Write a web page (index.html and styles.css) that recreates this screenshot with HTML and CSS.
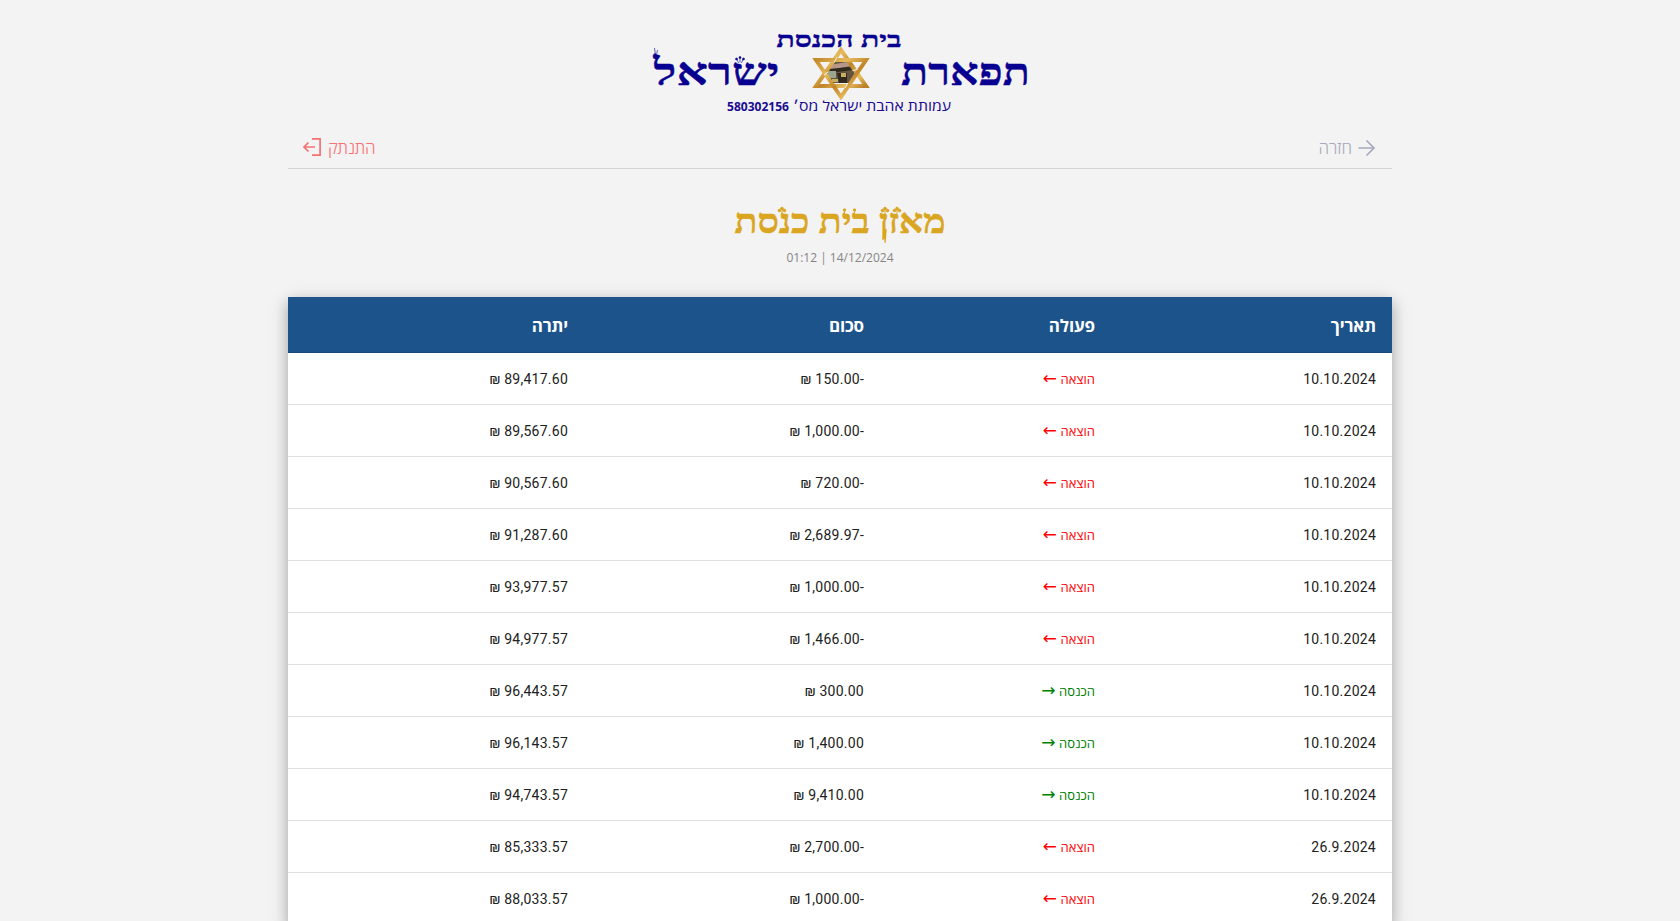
FILE: index.html
```html
<!DOCTYPE html>
<html lang="he" dir="rtl">
<head>
<meta charset="utf-8">
<title>מאזן בית כנסת</title>
<link rel="stylesheet" href="styles.css">
</head>
<body>
<main class="page">
  <header class="brand">
    <svg class="logo" viewBox="640 20 400 100" direction="rtl">
      <defs>
        <linearGradient id="gold" x1="0" y1="0" x2="1" y2="1">
          <stop offset="0" stop-color="#c58a2c"/><stop offset=".3" stop-color="#e6bb5c"/>
          <stop offset=".55" stop-color="#c08428"/><stop offset=".8" stop-color="#e8bf62"/><stop offset="1" stop-color="#bb7e25"/>
        </linearGradient>
      </defs>
      <g class="logo-serif" text-anchor="middle">
        <text x="839" y="46.500" font-size="22" textLength="125" lengthAdjust="spacingAndGlyphs">בית הכנסת</text>
        <text x="965.500" y="84.500" font-size="38" textLength="129" lengthAdjust="spacingAndGlyphs">תפארת</text>
        <text x="716.500" y="84.500" font-size="38" textLength="126" lengthAdjust="spacingAndGlyphs">ישראל</text>
      </g>
      <g class="crown-navy"><path d="M654.500 48l1 7M657.500 50l-1 5M737 59l1.500 4M740 57.500v5M743 59l-1.500 4"/><circle cx="736.500" cy="59" r="1"/><circle cx="740" cy="57.500" r="1"/><circle cx="743.500" cy="59" r="1"/></g>
      <path fill="#655440" d="M831 62h18l6 11-6 10h-17l-7-10z"/>
      <path fill="#b89689" d="M829 65l18-3 4 4-21 4z"/>
      <path fill="#30291c" d="M829 69l20-2 3 3-22 3zM837 73h10v10h-8z"/>
      <path fill="#9aa78e" d="M827 71h9v7h-7z"/>
      <path fill="#c8ad65" d="M841 73h5v4h-5zM832 79h6v3h-6z"/>
      <g fill="none" stroke="url(#gold)" stroke-width="4">
        <path d="M841 50L866 86H816Z"/>
        <path d="M841 97L816 60H866Z"/>
      </g>
      <g fill="none" stroke="#f3f3f3" stroke-width="1">
        <path d="M837 57.500l-3 5M852.500 70.500l5-1M845 88l3-5M824 75l4-3"/>
      </g>
      <text class="logo-sans" x="951" y="110.500" font-size="14" textLength="158" lengthAdjust="spacingAndGlyphs">עמותת אהבת ישראל מס׳</text>
      <text class="logo-sans logo-number" x="727" y="110.500" font-size="12.500" direction="ltr" textLength="62" lengthAdjust="spacingAndGlyphs">580302156</text>
    </svg>
  </header>
  <nav class="toolbar">
    <a class="link back">
      <svg class="arrow" viewBox="0 0 18 18"><path d="M.5 9h16M8.500 1.500L16 9l-7.500 7.500"/></svg>
      <span>חזרה</span>
    </a>
    <a class="link logout">
      <span>התנתק</span>
      <svg class="exit" viewBox="0 0 18 18"><path d="M9 .9h8.100v16.200H9M12 9H1M5.500 4.500L1 9l4.500 4.500"/></svg>
    </a>
  </nav>
  <h1 class="title">
    <svg class="title-art" viewBox="720 200 240 50" direction="rtl">
      <text x="840" y="232" font-size="34" text-anchor="middle" textLength="211" lengthAdjust="spacingAndGlyphs">מאזן בית כנסת</text>
      <path d="M883.300 228h3.400l-1 14h-1z"/>
      <g class="tagin">
        <path d="M782 208v6M885 208v6M897 208v6M854.500 210v4M844.500 210v4"/>
        <circle cx="779.500" cy="209.500" r="1.300"/><circle cx="782" cy="207.500" r="1.300"/><circle cx="784.500" cy="209.500" r="1.300"/>
        <circle cx="882.500" cy="209.500" r="1.300"/><circle cx="885" cy="207.500" r="1.300"/><circle cx="887.500" cy="209.500" r="1.300"/>
        <circle cx="894.500" cy="209.500" r="1.300"/><circle cx="897" cy="207.500" r="1.300"/><circle cx="899.500" cy="209.500" r="1.300"/>
        <circle cx="854.500" cy="209" r="1.200"/><circle cx="844.500" cy="209" r="1.200"/>
      </g>
    </svg>
  </h1>
  <p class="stamp" dir="ltr">01:12 | 14/12/2024</p>
  <table class="ledger">
    <colgroup><col class="c-date"><col class="c-kind"><col class="c-sum"><col class="c-left"></colgroup>
    <thead><tr><th>תאריך</th><th>פעולה</th><th>סכום</th><th>יתרה</th></tr></thead>
    <tbody>
      <tr><td>10.10.2024</td><td class="out">הוצאה <span class="dir">←</span></td><td><bdi dir="ltr">₪ 150.00-</bdi></td><td><bdi dir="ltr">₪ 89,417.60</bdi></td></tr>
      <tr><td>10.10.2024</td><td class="out">הוצאה <span class="dir">←</span></td><td><bdi dir="ltr">₪ 1,000.00-</bdi></td><td><bdi dir="ltr">₪ 89,567.60</bdi></td></tr>
      <tr><td>10.10.2024</td><td class="out">הוצאה <span class="dir">←</span></td><td><bdi dir="ltr">₪ 720.00-</bdi></td><td><bdi dir="ltr">₪ 90,567.60</bdi></td></tr>
      <tr><td>10.10.2024</td><td class="out">הוצאה <span class="dir">←</span></td><td><bdi dir="ltr">₪ 2,689.97-</bdi></td><td><bdi dir="ltr">₪ 91,287.60</bdi></td></tr>
      <tr><td>10.10.2024</td><td class="out">הוצאה <span class="dir">←</span></td><td><bdi dir="ltr">₪ 1,000.00-</bdi></td><td><bdi dir="ltr">₪ 93,977.57</bdi></td></tr>
      <tr><td>10.10.2024</td><td class="out">הוצאה <span class="dir">←</span></td><td><bdi dir="ltr">₪ 1,466.00-</bdi></td><td><bdi dir="ltr">₪ 94,977.57</bdi></td></tr>
      <tr><td>10.10.2024</td><td class="in">הכנסה <span class="dir">→</span></td><td><bdi dir="ltr">₪ 300.00</bdi></td><td><bdi dir="ltr">₪ 96,443.57</bdi></td></tr>
      <tr><td>10.10.2024</td><td class="in">הכנסה <span class="dir">→</span></td><td><bdi dir="ltr">₪ 1,400.00</bdi></td><td><bdi dir="ltr">₪ 96,143.57</bdi></td></tr>
      <tr><td>10.10.2024</td><td class="in">הכנסה <span class="dir">→</span></td><td><bdi dir="ltr">₪ 9,410.00</bdi></td><td><bdi dir="ltr">₪ 94,743.57</bdi></td></tr>
      <tr><td>26.9.2024</td><td class="out">הוצאה <span class="dir">←</span></td><td><bdi dir="ltr">₪ 2,700.00-</bdi></td><td><bdi dir="ltr">₪ 85,333.57</bdi></td></tr>
      <tr><td>26.9.2024</td><td class="out">הוצאה <span class="dir">←</span></td><td><bdi dir="ltr">₪ 1,000.00-</bdi></td><td><bdi dir="ltr">₪ 88,033.57</bdi></td></tr>
    </tbody>
  </table>
</main>
</body>
</html>
```
FILE: styles.css
```css
* { box-sizing: border-box; }
html, body { height: 100%; }
body { margin: 0; background: #f3f3f3; overflow: hidden; font-family: Roboto, "Liberation Sans", sans-serif; }
.page { width: 1104px; margin: 0 auto; padding-top: 20px; }
.brand { display: flex; justify-content: center; }
.logo { width: 400px; height: 100px; display: block; }
.logo-serif { font-family: "Liberation Serif", serif; font-weight: bold; fill: #080090; stroke: #080090; stroke-width: .4; }
.logo-sans { font-family: "Open Sans", "Liberation Sans", sans-serif; font-weight: 500; fill: #1a0a90; }
.logo-number { font-weight: 700; }
.crown-navy { fill: #080090; stroke: #080090; stroke-width: .6; }
.toolbar { height: 49px; padding: 9px 16px 0; border-bottom: 1px solid #d2d4d4; display: flex; justify-content: space-between; }
.link { display: flex; align-items: center; height: 38px; font: 300 17px/24px "Open Sans", "Liberation Sans", sans-serif; gap: 6px; }
.link svg { width: 18px; height: 18px; fill: none; stroke: currentColor; stroke-width: 1.7; }
.back { color: #a6aaba; }
.logout { color: #f87171; }
.logout span { letter-spacing: -.3px; }
.logout svg { position: relative; left: -1px; top: -1px; }
.title { margin: 32px 0 0; display: flex; justify-content: center; }
.title-art { width: 240px; height: 50px; display: block; fill: #daa520; font-family: "Liberation Serif", serif; font-weight: bold; }
.title-art text { stroke: #daa520; stroke-width: .5; }
.tagin { stroke: #daa520; stroke-width: 1; }
.stamp { margin: 0; height: 46px; text-align: center; color: #858585; font: 400 12px/14px "Open Sans", sans-serif; }
.ledger { width: 1104px; table-layout: fixed; border-collapse: separate; border-spacing: 0; background: #fff; box-shadow: 0 5px 15px rgba(0, 0, 0, .35); }
.c-date { width: 281px; }
.c-kind { width: 231px; }
.c-sum, .c-left { width: 296px; }
.ledger th { height: 56px; padding: 2px 16px 0; text-align: right; background: #1c538b; border-bottom: 1px solid #1a4a7c; color: #fff; font: 700 17px/24px "Open Sans", "Liberation Sans", sans-serif; letter-spacing: -.15px; }
.ledger td { height: 52px; padding: 0 16px; text-align: right; border-bottom: 1px solid #e0e0e0; color: #212121; font-size: 14px; line-height: 20px; letter-spacing: .25px; }
.ledger .out, .ledger .in { font-family: "Open Sans", sans-serif; font-size: 13px; letter-spacing: 0; }
.ledger .out { color: #f00; }
.ledger .in { color: #008000; }
.dir { font: 17px/14px "DejaVu Sans", sans-serif; }
```
